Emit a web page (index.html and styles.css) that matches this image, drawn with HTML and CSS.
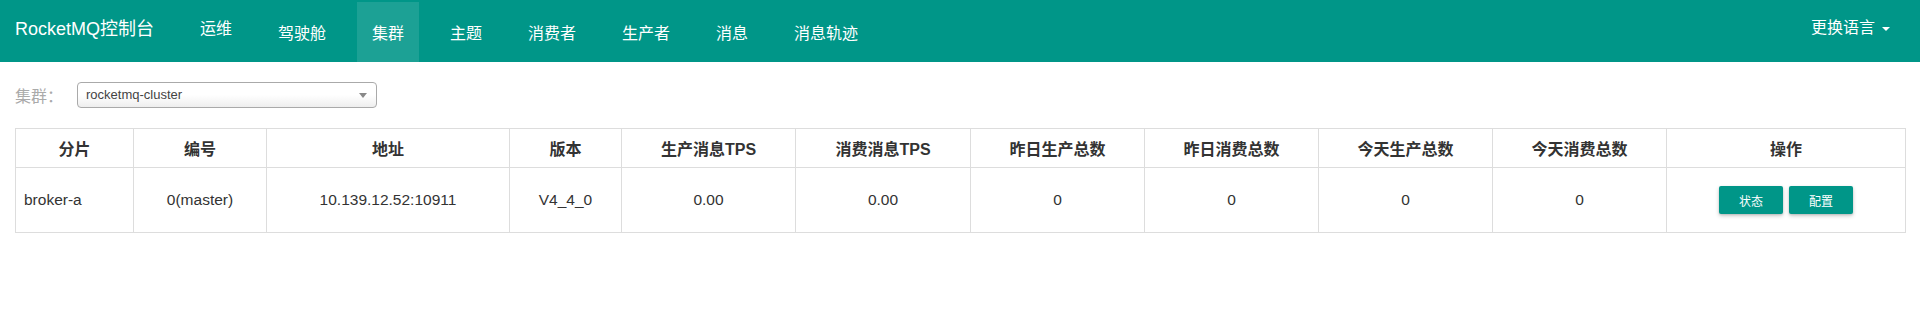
FILE: index.html
```html
<!DOCTYPE html>
<html lang="zh-CN">
<head>
    <meta charset="UTF-8">
    <title>RocketMQ控制台</title>
    <link rel="stylesheet" href="styles.css">
</head>
<body>
<div class="navbar">
    <a href="" class="brand">RocketMQ控制台</a>
    <ul class="nav">
        <li class="drop"><a href="">运维</a></li>
        <li><a href="">驾驶舱</a></li>
        <li class="active"><a href="">集群</a></li>
        <li><a href="">主题</a></li>
        <li><a href="">消费者</a></li>
        <li><a href="">生产者</a></li>
        <li><a href="">消息</a></li>
        <li><a href="">消息轨迹</a></li>
    </ul>
    <a href="" class="lang">更换语言<span class="caret"></span></a>
</div>
<div class="container">
    <div class="filter">
        <label>集群：</label>
        <div class="select">
            <span>rocketmq-cluster</span>
            <b class="arrow"></b>
        </div>
    </div>
    <table class="cluster">
        <colgroup>
            <col style="width:118px">
            <col style="width:133px">
            <col style="width:243px">
            <col style="width:112px">
            <col style="width:174px">
            <col style="width:175px">
            <col style="width:174px">
            <col style="width:174px">
            <col style="width:174px">
            <col style="width:174px">
            <col style="width:239px">
        </colgroup>
        <thead>
            <tr>
                <th>分片</th>
                <th>编号</th>
                <th>地址</th>
                <th>版本</th>
                <th>生产消息TPS</th>
                <th>消费消息TPS</th>
                <th>昨日生产总数</th>
                <th>昨日消费总数</th>
                <th>今天生产总数</th>
                <th>今天消费总数</th>
                <th>操作</th>
            </tr>
        </thead>
        <tbody>
            <tr>
                <td class="name">broker-a</td>
                <td>0(master)</td>
                <td>10.139.12.52:10911</td>
                <td>V4_4_0</td>
                <td>0.00</td>
                <td>0.00</td>
                <td>0</td>
                <td>0</td>
                <td>0</td>
                <td>0</td>
                <td>
                    <button class="btn">状态</button><button class="btn">配置</button>
                </td>
            </tr>
        </tbody>
    </table>
</div>
</body>
</html>
```

FILE: styles.css
```css
* {
    padding: 0;
    margin: 0;
    box-sizing: border-box;
}
body {
    font-family: "Liberation Sans", "Noto Sans CJK SC", sans-serif;
    color: #333;
    background-color: #fff;
}
a {
    text-decoration: none;
    color: inherit;
}
li {
    list-style: none;
}
.navbar {
    display: flex;
    height: 62px;
    padding: 0 15px;
    background-color: #009688;
    color: #fff;
}
.brand {
    width: 170px;
    font-size: 18px;
    line-height: 58px;
}
.nav {
    display: flex;
    margin-top: 2px;
}
.nav li {
    margin-right: 16px;
}
.nav li a {
    display: block;
    height: 60px;
    padding: 4px 15px 0;
    font-size: 16px;
    line-height: 56px;
}
.nav li.drop a {
    padding-top: 0;
    line-height: 54px;
}
.nav li.active a {
    background-color: rgba(255, 255, 255, 0.11);
}
.lang {
    margin-left: auto;
    padding: 0 15px;
    font-size: 16px;
    line-height: 56px;
}
.caret {
    display: inline-block;
    margin-left: 7px;
    vertical-align: middle;
    border-top: 4px solid #fff;
    border-left: 4px solid transparent;
    border-right: 4px solid transparent;
}
.container {
    padding: 20px 15px;
}
.filter {
    display: flex;
    align-items: center;
    height: 26px;
}
.filter label {
    width: 62px;
    font-size: 16px;
    color: #aaa;
}
.select {
    position: relative;
    width: 300px;
    height: 26px;
    padding-left: 8px;
    border: 1px solid #aaa;
    border-radius: 4px;
    background-image: linear-gradient(to top, #eee 0%, #fff 50%);
    font-size: 13px;
    line-height: 24px;
    color: #444;
}
.select .arrow {
    position: absolute;
    top: 10px;
    right: 9px;
    border-top: 5px solid #888;
    border-left: 4px solid transparent;
    border-right: 4px solid transparent;
}
.cluster {
    width: 100%;
    margin-top: 20px;
    border-collapse: collapse;
    table-layout: fixed;
}
.cluster th,
.cluster td {
    border: 1px solid #ddd;
    text-align: center;
    vertical-align: middle;
}
.cluster th {
    height: 39px;
    padding: 0 8px;
    font-size: 16px;
    font-weight: bold;
}
.cluster td {
    height: 65px;
    padding: 0 8px;
    font-size: 15.5px;
}
.cluster td.name {
    text-align: left;
}
.btn {
    width: 64px;
    height: 28px;
    margin: 0 3px;
    border: none;
    border-radius: 2px;
    background-color: #009688;
    color: #fff;
    font-family: "Liberation Sans", "Noto Sans CJK SC", sans-serif;
    font-size: 12px;
    vertical-align: middle;
    box-shadow: 0 2px 4px rgba(0, 0, 0, 0.2), 0 1px 2px rgba(0, 0, 0, 0.12);
}
```
